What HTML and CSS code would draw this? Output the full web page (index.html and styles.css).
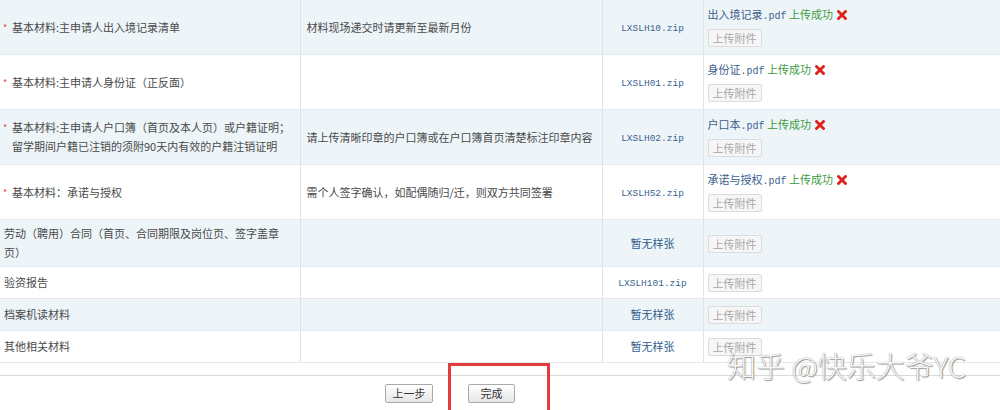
FILE: index.html
```html
<!DOCTYPE html>
<html lang="zh">
<head>
<meta charset="utf-8">
<title>材料上传</title>
<link rel="stylesheet" href="styles.css">
</head>
<body>
<div class="page">
  <table class="grid">
    <colgroup>
      <col class="c1"><col class="c2"><col class="c3"><col class="c4">
    </colgroup>
    <tbody>
      <tr class="alt">
        <td class="name"><div class="nm"><span class="req">*</span><span class="lbl">基本材料:主申请人出入境记录清单</span></div></td>
        <td class="note">材料现场递交时请更新至最新月份</td>
        <td class="sample"><span class="mono">LXSLH10.zip</span></td>
        <td class="up"><div class="file">出入境记录<span class="mono">.pdf</span> <span class="ok">上传成功</span><svg class="del" viewBox="0 0 10 10" width="10" height="10"><path d="M1.5 1.5L8.5 8.5M8.5 1.5L1.5 8.5"/></svg></div><span class="btn">上传附件</span></td>
      </tr>
      <tr>
        <td class="name"><div class="nm"><span class="req">*</span><span class="lbl">基本材料:主申请人身份证（正反面）</span></div></td>
        <td class="note"></td>
        <td class="sample"><span class="mono">LXSLH01.zip</span></td>
        <td class="up"><div class="file">身份证<span class="mono">.pdf</span> <span class="ok">上传成功</span><svg class="del" viewBox="0 0 10 10" width="10" height="10"><path d="M1.5 1.5L8.5 8.5M8.5 1.5L1.5 8.5"/></svg></div><span class="btn">上传附件</span></td>
      </tr>
      <tr class="alt">
        <td class="name"><div class="nm"><span class="req">*</span><span class="lbl">基本材料:主申请人户口簿（首页及本人页）或户籍证明；留学期间户籍已注销的须附90天内有效的户籍注销证明</span></div></td>
        <td class="note">请上传清晰印章的户口簿或在户口簿首页清楚标注印章内容</td>
        <td class="sample"><span class="mono">LXSLH02.zip</span></td>
        <td class="up"><div class="file">户口本<span class="mono">.pdf</span> <span class="ok">上传成功</span><svg class="del" viewBox="0 0 10 10" width="10" height="10"><path d="M1.5 1.5L8.5 8.5M8.5 1.5L1.5 8.5"/></svg></div><span class="btn">上传附件</span></td>
      </tr>
      <tr>
        <td class="name"><div class="nm"><span class="req">*</span><span class="lbl">基本材料：承诺与授权</span></div></td>
        <td class="note">需个人签字确认，如配偶随归/迁，则双方共同签署</td>
        <td class="sample"><span class="mono">LXSLH52.zip</span></td>
        <td class="up"><div class="file">承诺与授权<span class="mono">.pdf</span> <span class="ok">上传成功</span><svg class="del" viewBox="0 0 10 10" width="10" height="10"><path d="M1.5 1.5L8.5 8.5M8.5 1.5L1.5 8.5"/></svg></div><span class="btn">上传附件</span></td>
      </tr>
      <tr class="alt">
        <td class="name plain tall"><span class="wide">劳动（聘用）合同（首页、合同期限及岗位页、签字盖章页）</span></td>
        <td class="note"></td>
        <td class="sample">暂无样张</td>
        <td class="up only"><span class="btn">上传附件</span></td>
      </tr>
      <tr>
        <td class="name plain">验资报告</td>
        <td class="note"></td>
        <td class="sample"><span class="mono">LXSLH101.zip</span></td>
        <td class="up only"><span class="btn">上传附件</span></td>
      </tr>
      <tr class="alt">
        <td class="name plain">档案机读材料</td>
        <td class="note"></td>
        <td class="sample">暂无样张</td>
        <td class="up only"><span class="btn">上传附件</span></td>
      </tr>
      <tr>
        <td class="name plain">其他相关材料</td>
        <td class="note"></td>
        <td class="sample">暂无样张</td>
        <td class="up only"><span class="btn">上传附件</span></td>
      </tr>
    </tbody>
  </table>
  <div class="actions">
    <span class="act">上一步</span>
    <span class="act">完成</span>
  </div>
  <div class="highlight"></div>
  <div class="watermark">知乎 @快乐大爷YC</div>
</div>
</body>
</html>
```

FILE: styles.css
```css
html, body {
  margin: 0;
  padding: 0;
  background: #ffffff;
}
body {
  font-family: "Noto Sans CJK SC", "Noto Sans", sans-serif;
  font-size: 11px;
  color: #4a4a4a;
  overflow: hidden;
  text-spacing-trim: space-all;
}
.page {
  position: relative;
  width: 1000px;
  height: 410px;
  overflow: hidden;
}
.grid {
  width: 1000px;
  margin-top: -1px;
  border-collapse: collapse;
  table-layout: fixed;
}
.c1 { width: 300px; }
.c2 { width: 302px; }
.c3 { width: 101px; }
.c4 { width: 297px; }
.grid td {
  border-top: 1px solid #e2e8ed;
  border-bottom: 1px solid #e2e8ed;
  border-left: 1px solid #dce4ea;
  vertical-align: middle;
  line-height: 19px;
  padding: 0;
}
.grid td:first-child { border-left: none; }
.grid tr.alt td { background: #eef5f9; }
.grid td.name {
  padding: 4px 2px 4px 3px;
}
.grid td.name.plain {
  padding-left: 4px;
}
.nm {
  display: flex;
  align-items: flex-start;
}
.nm .req {
  flex: 0 0 9px;
  color: #e04848;
  font-size: 9px;
}
.nm .lbl {
  flex: 1 1 auto;
  min-width: 0;
}
.name .wide {
  display: block;
  width: 288px;
}
.grid td.note {
  padding: 4px 6px;
}
.grid td.sample {
  text-align: center;
  color: #2f5c8c;
  padding: 0 2px;
}
.mono {
  font-family: "Liberation Mono", "DejaVu Sans Mono", monospace;
  font-size: 9.5px;
}
.sample .mono { color: #3a6390; }
.grid td.up {
  padding: 7px 4px 7px 4px;
  line-height: 14px;
}
.grid td.up.only {
  padding: 7px 4px 6px 4px;
}
.file {
  line-height: 14px;
  height: 14px;
  margin-bottom: 8px;
  color: #3c5f8c;
  white-space: nowrap;
}
.file .mono { font-size: 10px; }
.ok { color: #3d9a3d; }
.del {
  margin-left: 4px;
  vertical-align: -1px;
}
.del path {
  stroke: #e0201a;
  stroke-width: 2.8;
  stroke-linecap: square;
  fill: none;
}
.btn {
  display: block;
  box-sizing: border-box;
  width: 54px;
  height: 18px;
  line-height: 16px;
  text-align: center;
  border: 1px solid #dcdcdc;
  border-radius: 2px;
  background: #f6f6f6;
  color: #a8a8a8;
  font-size: 11px;
}
.actions {
  margin-top: 12px;
  border-top: 1px solid #dadada;
  padding: 8px 0 0 385px;
  display: flex;
  gap: 35px;
}
.act {
  box-sizing: border-box;
  width: 48px;
  height: 19px;
  line-height: 17px;
  text-align: center;
  border: 1px solid #a9a9a9;
  border-radius: 2px;
  background: linear-gradient(#ffffff, #e6e6e6);
  color: #333333;
  font-size: 11px;
}
.act + .act { width: 47px; }
.highlight {
  position: absolute;
  left: 448px;
  top: 363px;
  width: 102px;
  height: 60px;
  box-sizing: border-box;
  border: 3px solid #e23b3b;
}
.watermark {
  position: absolute;
  left: 727px;
  top: 347px;
  font-size: 29px;
  font-weight: 300;
  line-height: 36px;
  color: rgba(255,255,255,0.95);
  text-shadow: 0 0 1px #7d7d7d, 1px 1px 1px #9a9a9a;
  white-space: nowrap;
}
```
